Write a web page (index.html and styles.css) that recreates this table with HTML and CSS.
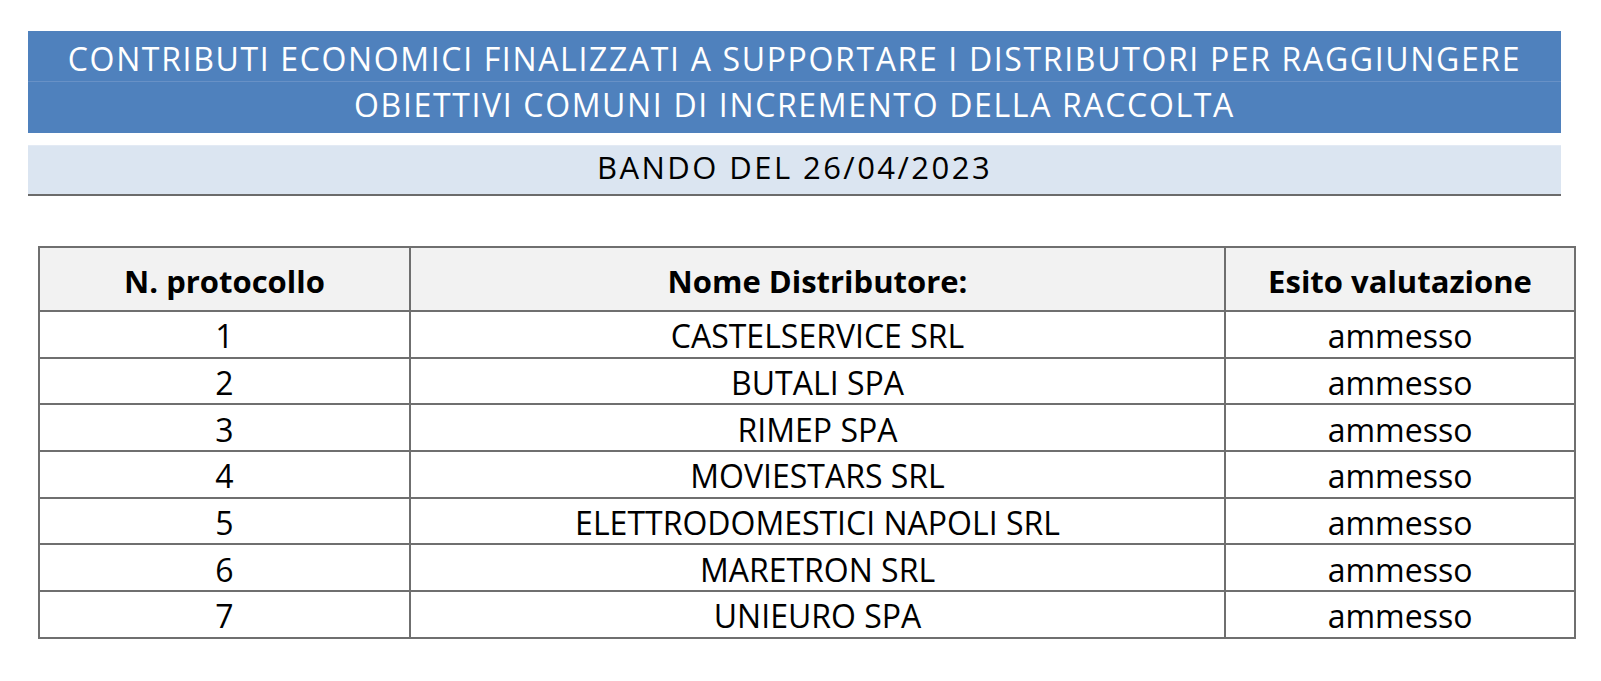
FILE: index.html
```html
<!DOCTYPE html>
<html lang="it">
<head>
<meta charset="utf-8">
<title>Bando del 26/04/2023</title>
<link rel="stylesheet" href="styles.css">
</head>
<body>
<div class="page">
  <header class="title-band">
    <div class="title-line first">CONTRIBUTI ECONOMICI FINALIZZATI A SUPPORTARE I DISTRIBUTORI PER RAGGIUNGERE</div>
    <div class="title-line second">OBIETTIVI COMUNI DI INCREMENTO DELLA RACCOLTA</div>
  </header>
  <div class="sub-band">BANDO DEL 26/04/2023</div>
  <table class="results">
    <colgroup>
      <col class="c1"><col class="c2"><col class="c3">
    </colgroup>
    <thead>
      <tr><th>N. protocollo</th><th>Nome Distributore:</th><th>Esito valutazione</th></tr>
    </thead>
    <tbody>
      <tr><td>1</td><td>CASTELSERVICE SRL</td><td>ammesso</td></tr>
      <tr><td>2</td><td>BUTALI SPA</td><td>ammesso</td></tr>
      <tr><td>3</td><td>RIMEP SPA</td><td>ammesso</td></tr>
      <tr><td>4</td><td>MOVIESTARS SRL</td><td>ammesso</td></tr>
      <tr><td>5</td><td>ELETTRODOMESTICI NAPOLI SRL</td><td>ammesso</td></tr>
      <tr><td>6</td><td>MARETRON SRL</td><td>ammesso</td></tr>
      <tr><td>7</td><td>UNIEURO SPA</td><td>ammesso</td></tr>
    </tbody>
  </table>
</div>
</body>
</html>
```

FILE: styles.css
```css
html, body {
  margin: 0;
  padding: 0;
  background: #ffffff;
}

.page {
  padding-top: 31px;
  font-family: "Open Sans", "Lato", "Liberation Sans", sans-serif;
  color: #000000;
}

.title-band {
  margin-left: 28px;
  width: 1533px;
  height: 102px;
  background: #4f81bd;
  color: #ffffff;
  display: flex;
  flex-direction: column;
}

.title-line {
  height: 51px;
  box-sizing: border-box;
  text-align: center;
  font-size: 32px;
  letter-spacing: 1.65px;
  line-height: 44px;
}

.title-line.first {
  padding-top: 6px;
  border-bottom: 1px solid #6891c6;
}

.title-line.second {
  padding-top: 1px;
}

.sub-band {
  margin-top: 12px;
  margin-left: 28px;
  width: 1533px;
  height: 51px;
  box-sizing: border-box;
  background: #dbe5f1;
  border-top: 1px solid #e3eaf4;
  border-bottom: 2px solid #6b6b6b;
  text-align: center;
  font-size: 31px;
  line-height: 42px;
  letter-spacing: 2.45px;
}

.results {
  margin-top: 50px;
  margin-left: 38px;
  width: 1536px;
  border-collapse: collapse;
  table-layout: fixed;
  font-size: 32px;
}

.results col.c1 { width: 371px; }
.results col.c2 { width: 815px; }
.results col.c3 { width: 350px; }

.results th,
.results td {
  border: 2px solid #6f6f6f;
  text-align: center;
  padding: 0;
  vertical-align: middle;
  line-height: 36px;
}

.results thead tr {
  height: 64px;
}

.results tbody tr {
  height: 46.7px;
}

.results th {
  background: #f2f2f2;
  font-weight: 700;
  font-size: 31px;
  padding-top: 4px;
}

.results td {
  padding-top: 4px;
}
```
